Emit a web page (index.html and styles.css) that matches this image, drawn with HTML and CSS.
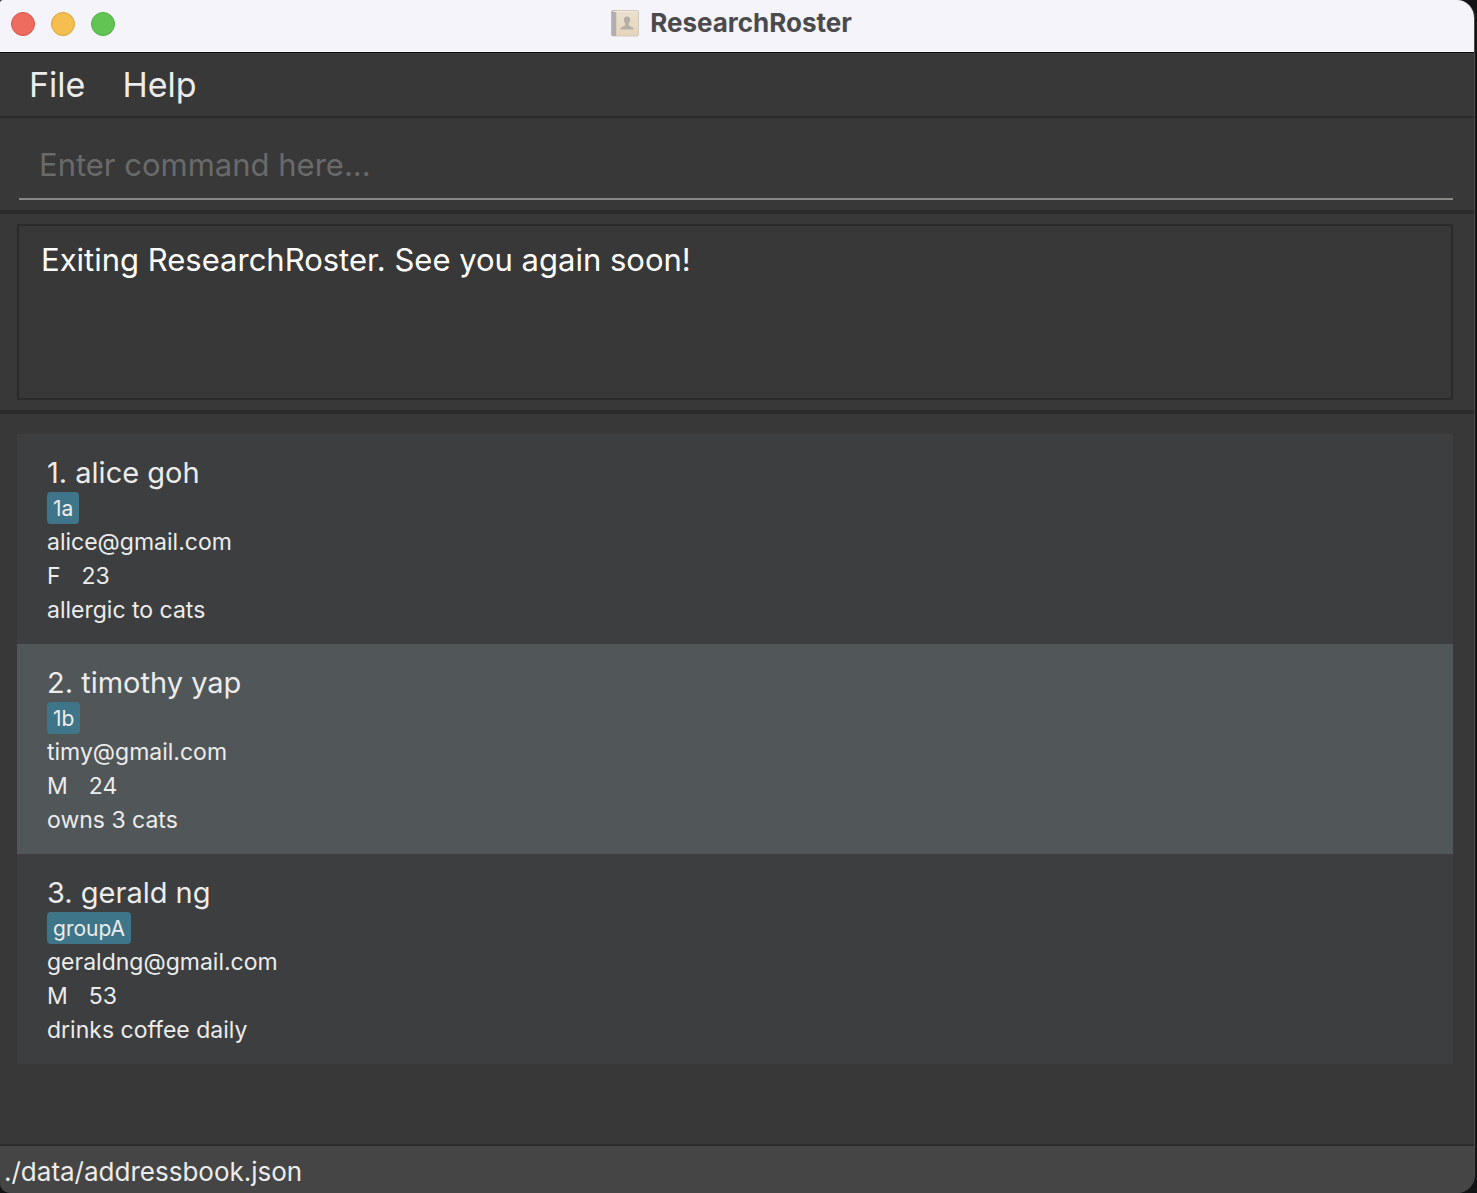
FILE: index.html
```html
<!DOCTYPE html>
<html lang="en">
<head>
<meta charset="utf-8">
<title>ResearchRoster</title>
<link rel="stylesheet" href="styles.css">
</head>
<body>
<div class="window">
  <header class="titlebar">
    <div class="controls">
      <button class="control control-close" type="button" aria-label="Close"></button>
      <button class="control control-minimise" type="button" aria-label="Minimise"></button>
      <button class="control control-zoom" type="button" aria-label="Zoom"></button>
    </div>
    <svg class="app-icon" viewBox="0 0 28 27" aria-hidden="true">
      <defs>
        <linearGradient id="cover" x1="0" y1="0" x2="0" y2="1">
          <stop offset="0" stop-color="#ebe0d0"/>
          <stop offset="1" stop-color="#e5d5ba"/>
        </linearGradient>
      </defs>
      <rect x="0.5" y="0.5" width="27" height="25.5" rx="1.5" fill="url(#cover)" stroke="#d3c9bb"/>
      <path d="M1.5 0.5H5V26H1.500Q0.5 26 0.5 25V1.500Q0.5 0.5 1.500 0.5Z" fill="#b3acb1"/>
      <path d="M5.500 1V26" stroke="#d8cec2"/>
      <path d="M2 1.500H26.500" stroke="#f5ecdd"/>
      <path d="M16 6.500C18.100 6.500 19.200 8 19.100 10C19 11.800 18.300 12.800 17.700 13.600V15.200C18.300 16.400 22.500 16.400 22.800 19.500H9.200C9.500 16.400 13.700 16.400 14.300 15.200V13.600C13.700 12.800 13 11.800 12.900 10C12.800 8 13.900 6.500 16 6.500Z" fill="#b5aea7"/>
    </svg>
    <h1 class="title">ResearchRoster</h1>
  </header>

  <nav class="menubar" aria-label="Main menu">
    <button class="menu" type="button">File</button>
    <button class="menu" type="button">Help</button>
  </nav>

  <div class="command-pane">
    <input class="command" type="text" placeholder="Enter command here..." aria-label="Command">
  </div>

  <div class="result-pane">
    <textarea class="result" readonly spellcheck="false" aria-label="Result">Exiting ResearchRoster. See you again soon!</textarea>
  </div>

  <main class="list-pane">
    <ul class="people">
      <li class="person">
        <h2 class="name">1. alice goh</h2>
        <div class="tags"><span class="tag">1a</span></div>
        <p class="detail">alice@gmail.com</p>
        <p class="detail traits"><span>F</span><span>23</span></p>
        <p class="detail">allergic to cats</p>
      </li>
      <li class="person">
        <h2 class="name">2. timothy yap</h2>
        <div class="tags"><span class="tag">1b</span></div>
        <p class="detail">timy@gmail.com</p>
        <p class="detail traits"><span>M</span><span>24</span></p>
        <p class="detail">owns 3 cats</p>
      </li>
      <li class="person">
        <h2 class="name">3. gerald ng</h2>
        <div class="tags"><span class="tag">groupA</span></div>
        <p class="detail">geraldng@gmail.com</p>
        <p class="detail traits"><span>M</span><span>53</span></p>
        <p class="detail">drinks coffee daily</p>
      </li>
    </ul>
  </main>

  <footer class="statusbar">./data/addressbook.json</footer>
</div>
</body>
</html>
```

FILE: styles.css
```css
* {
  box-sizing: border-box;
}

body {
  margin: 0;
  padding-right: 2px;
  background: #121416;
  color: #ececec;
  font-family: Inter, "Liberation Sans", sans-serif;
}

h1, h2, p, ul {
  margin: 0;
  padding: 0;
  font-weight: 400;
}

button, input, textarea {
  margin: 0;
  font-family: inherit;
}

.window {
  display: flex;
  flex-direction: column;
  min-height: 100vh;
  overflow: hidden;
  border-right: 1px solid #4c4c4c;
  border-radius: 3px 18px 18px 10px;
  background: #383838;
}

.titlebar {
  display: flex;
  align-items: center;
  justify-content: center;
  gap: 11px;
  position: relative;
  height: 53px;
  padding: 0 12px 6px 0;
  border-bottom: 1px solid #0c0d0f;
  margin-right: -1px;
  background: #f5f4fb;
}

.controls {
  display: flex;
  gap: 16px;
  position: absolute;
  left: 11px;
  top: 12px;
}

.control {
  width: 24px;
  height: 24px;
  padding: 0;
  border: 1px solid;
  border-radius: 50%;
}

.control-close {
  background: #ed6b5f;
  border-color: #d95549;
}

.control-minimise {
  background: #f5be4f;
  border-color: #dba23b;
}

.control-zoom {
  background: #61c554;
  border-color: #4fae41;
}

.app-icon {
  width: 28px;
  height: 27px;
}

.title {
  color: #4b4a4d;
  font-size: 26px;
  font-weight: 700;
  line-height: 32px;
}

.menubar {
  display: flex;
  gap: 37px;
  padding: 8px 29px;
  border-bottom: 2px solid #2b2b2b;
}

.menu {
  padding: 0;
  border: 0;
  background: none;
  color: inherit;
  font-size: 34px;
  line-height: 47px;
}

.command-pane {
  padding: 10px 21px 10px 19px;
  border-bottom: 4px solid #2b2b2b;
}

.command {
  display: block;
  width: 100%;
  height: 72px;
  padding: 2px 20px 0;
  border: 0;
  border-bottom: 2px solid #888986;
  outline: 0;
  background: none;
  color: #fff;
  font-size: 31px;
}

.command::placeholder {
  color: #6a6a6a;
  opacity: 1;
}

.result-pane {
  padding: 10px 21px 10px 17px;
  border-bottom: 4px solid #2b2b2b;
}

.result {
  display: block;
  width: 100%;
  height: 176px;
  padding: 12px 22px;
  border: 2px solid #2b2b2b;
  outline: 0;
  resize: none;
  background: none;
  color: #fff;
  font-size: 31px;
  line-height: 44px;
}

.list-pane {
  flex: 1;
  padding: 20px 21px 20px 17px;
}

.people {
  list-style: none;
}

.person {
  padding: 20px 30px 18px;
  background: #3c3e3f;
}

.person:nth-child(even) {
  background: #515658;
}

.name {
  font-size: 29px;
  line-height: 38px;
}

.tags {
  display: flex;
  gap: 6px;
}

.tag {
  padding: 2px 6px 0;
  border-radius: 4px;
  background: #3e7589;
  font-size: 21px;
  line-height: 30px;
}

.detail {
  padding-top: 2px;
  font-size: 23px;
  line-height: 32px;
}

.traits {
  display: flex;
  gap: 21px;
}

.statusbar {
  padding: 7px 4px 2px;
  border-top: 2px solid #2b2b2b;
  background: #454545;
  font-size: 26px;
  line-height: 38px;
}
```
